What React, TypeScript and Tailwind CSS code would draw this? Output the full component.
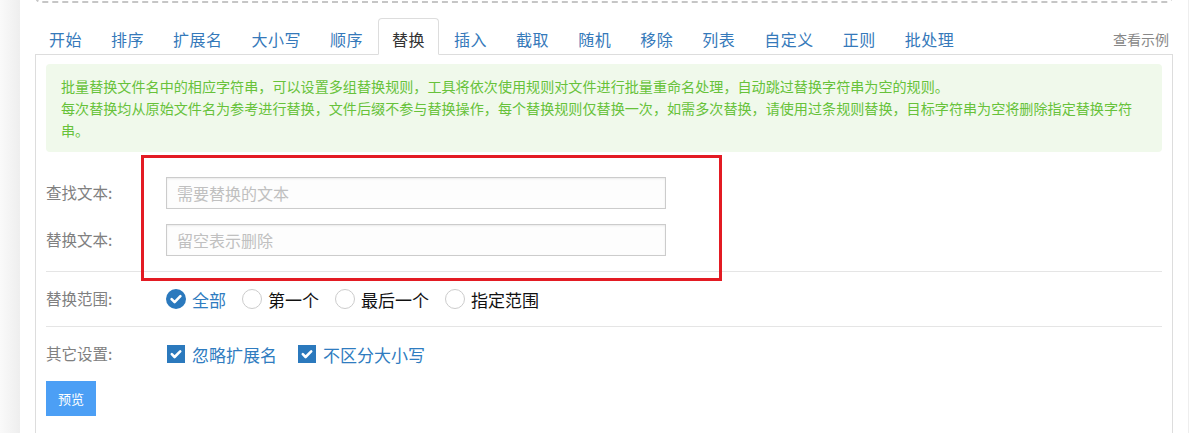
const TABS = ["开始", "排序", "扩展名", "大小写", "顺序", "替换", "插入", "截取", "随机", "移除", "列表", "自定义", "正则", "批处理"];
const ACTIVE_TAB = "替换";

const RANGES = [
  { label: "全部", checked: true },
  { label: "第一个", checked: false },
  { label: "最后一个", checked: false },
  { label: "指定范围", checked: false },
];

export default function App() {
  return (
    <div className="relative flex h-[433px] w-[1190px] overflow-hidden bg-white font-['Noto_Sans_CJK_SC','Microsoft_YaHei',sans-serif]">
      <div className="w-[20px] shrink-0 bg-gradient-to-r from-[#fafafa] to-[#eeeeee]" />

      <div className="ml-[15px] flex w-[1138px] shrink-0 flex-col">
        <div className="-mt-[17px] h-[20px] shrink-0 rounded-[6px] border-2 border-dashed border-[#c6c6c6]" />

        <div className="mt-[15px] flex items-end border-b border-[#ddd]">
          {TABS.map((tab) => (
            <div
              key={tab}
              className={`-mb-px mr-[1px] flex h-[37px] items-center rounded-t-[4px] border px-[13px] pt-[4px] text-[16px] leading-none tracking-[0.5px] ${
                tab === ACTIVE_TAB ? "border-[#ddd] border-b-white bg-white text-[#333]" : "border-transparent text-[#3579ba]"
              }`}
            >
              {tab}
            </div>
          ))}
          <div className="mb-[8px] ml-auto mr-[4px] text-[14px] leading-none text-[#888]">查看示例</div>
        </div>

        <div className="flex-1 border-x border-[#ddd] px-[10px] pt-[9px]">
          <div className="rounded-[4px] bg-[#f0f9eb] px-[15px] py-[11px] text-[14.1px] leading-[22px] text-[#67c23a]">
            <p className="whitespace-nowrap">
              批量替换文件名中的相应字符串，可以设置多组替换规则，工具将依次使用规则对文件进行批量重命名处理，自动跳过替换字符串为空的规则。
            </p>
            <p className="whitespace-nowrap">
              每次替换均从原始文件名为参考进行替换，文件后缀不参与替换操作，每个替换规则仅替换一次，如需多次替换，请使用过条规则替换，目标字符串为空将删除指定替换字符
            </p>
            <p>串。</p>
          </div>

          <FieldRow label="查找文本:" placeholder="需要替换的文本" className="mt-[25px]" />
          <FieldRow label="替换文本:" placeholder="留空表示删除" className="mt-[15px]" />

          <div className="mt-[15px] h-px bg-[#e5e5e5]" />

          <div className="flex h-[54px] items-center">
            <Label>替换范围:</Label>
            {RANGES.map((r) => (
              <div key={r.label} className="mr-[16px] flex items-center">
                <Radio checked={r.checked} />
                <span className={`ml-[6px] text-[17px] leading-none ${r.checked ? "text-[#2f7cc0]" : "text-[#111]"}`}>
                  {r.label}
                </span>
              </div>
            ))}
          </div>

          <div className="h-px bg-[#e5e5e5]" />

          <div className="flex h-[54px] items-center">
            <Label>其它设置:</Label>
            <div className="ml-[1px] mr-[21px] flex items-center">
              <Checkbox />
              <span className="ml-[7px] text-[17px] leading-none text-[#2f7cc0]">忽略扩展名</span>
            </div>
            <div className="flex items-center">
              <Checkbox />
              <span className="ml-[7px] text-[17px] leading-none text-[#2f7cc0]">不区分大小写</span>
            </div>
          </div>

          <button className="h-[35px] w-[50px] bg-[#4c9ff5] text-[13px] text-white">预览</button>
        </div>
      </div>

      <div className="ml-[15px] w-px bg-[#eeeeee]" />

      {/* 标注框 */}
      <div className="absolute left-[141px] top-[155px] h-[126px] w-[581px] border-[3px] border-[#e31b23]" />
    </div>
  );
}

function Label({ children }: { children: string }) {
  return <div className="w-[120px] shrink-0 text-[15.5px] leading-none text-[#808080]">{children}</div>;
}

function FieldRow({ label, placeholder, className }: { label: string; placeholder: string; className: string }) {
  return (
    <div className={`flex h-[32px] items-center ${className}`}>
      <Label>{label}</Label>
      <input
        placeholder={placeholder}
        className="h-[32px] w-[500px] border border-[#ccc] bg-[#fdfdfd] px-[10px] text-[16px] shadow-[inset_0_1px_2px_rgba(0,0,0,0.08)] outline-none placeholder:text-[#c0c0c0]"
      />
    </div>
  );
}

function Radio({ checked }: { checked: boolean }) {
  if (!checked) {
    return <span className="block h-[20px] w-[20px] rounded-full border border-[#ccc] bg-white" />;
  }
  return (
    <svg width="20" height="20" viewBox="0 0 20 20" className="block">
      <circle cx="10" cy="10" r="10" fill="#2b79bd" />
      <path d="M5.6 10.2 L8.6 13.2 L14.4 7.2" fill="none" stroke="#fff" strokeWidth="2.6" strokeLinecap="round" strokeLinejoin="round" />
    </svg>
  );
}

function Checkbox() {
  return (
    <svg width="18" height="18" viewBox="0 0 18 18" className="block">
      <rect width="18" height="18" fill="#2b79bd" />
      <path d="M4.8 9.2 L7.6 12 L13.2 6.4" fill="none" stroke="#fff" strokeWidth="2.6" strokeLinecap="round" strokeLinejoin="round" />
    </svg>
  );
}
